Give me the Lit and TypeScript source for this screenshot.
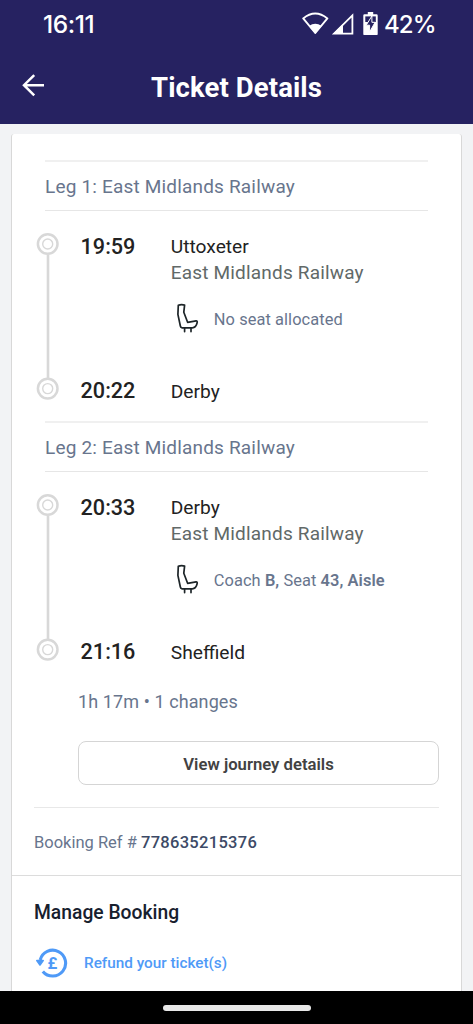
import { LitElement, html, css, svg } from "lit";
import { customElement, property } from "lit/decorators.js";

const base = css`
  * { box-sizing: border-box; }
  :host { display: block; font-family: Roboto, sans-serif; white-space: nowrap; }
`;

@customElement("status-bar")
class StatusBar extends LitElement {
  static styles = [base, css`
    .bar { display: flex; align-items: center; height: 48px; padding: 0 38px 0 43px; color: #fff; font-family: Inter, Roboto, sans-serif; font-size: 24.5px; font-weight: 500; }
    .clock { flex: 1; letter-spacing: -0.4px; }
    .icons { display: block; flex: none; }
    .level { width: 51px; margin-left: 5px; font-size: 24px; letter-spacing: -0.9px; }
  `];
  render() {
    return html`<div class="bar">
      <span class="clock">16:11</span>
      <svg class="icons" width="78" height="26" viewBox="300 11 78 26" fill="none" stroke="#fff">
        <path d="M302.2 18.4 Q314.2 8.6 326.4 18.4 L314.3 33 Z" stroke-width="1.9" stroke-linejoin="round" />
        <path d="M308 26 Q314.3 21.6 320.6 26 L314.3 33.8 Z" fill="#fff" stroke="none" />
        <path d="M333 33.6 L351.4 15.3 V33.6 Z" stroke-width="1.8" />
        <path d="M332 34 L342 24 V34 Z" fill="#fff" stroke="none" />
        <path d="M366.8 12 h5.4 v2.3 h3.3 q1.2 0 1.2 1.2 v18.4 q0 1.2 -1.2 1.2 h-12 q-1.2 0 -1.2 -1.2 v-18.4 q0 -1.2 1.2 -1.2 h3.3 z" fill="#fff" stroke="none" />
        <path d="M364.3 16.4 H374.8 V22 H364.3 Z" fill="#262261" stroke="none" />
        <path d="M370.9 16 L365.2 25.2 H368.6 V32 L374.1 22.3 H370.9 Z" fill="#262261" stroke-width="1" />
      </svg>
      <span class="level">42%</span>
    </div>`;
  }
}

@customElement("journey-leg")
class JourneyLeg extends LitElement {
  @property({ attribute: false }) leg: any;
  static styles = [base, css`
    .leg { height: 261.3px; padding: 0 33px 0 33px; }
    .head { height: 51px; border-top: 2px solid #f0f0f0; border-bottom: 1px solid #e6e6e6; color: #68758d; font-size: 19px; line-height: 50px; letter-spacing: 0.18px; }
    .body { display: grid; grid-template-columns: 45.6px 90.2px 1fr; margin-left: -10px; padding-top: 21px; }
    .rail { display: block; }
    .times, .stops { display: flex; flex-direction: column; justify-content: space-between; height: 173px; }
    .times { font-size: 21.6px; font-weight: 500; color: #222; line-height: 28px; padding-top: 0.5px; }
    .stops { font-size: 19.2px; color: #222; line-height: 26px; padding-top: 1.5px; }
    .operator { color: #616968; font-size: 19px; letter-spacing: 0.18px; }
    .seat { display: flex; align-items: center; gap: 14px; margin-top: 18px; height: 32px; color: #68758d; font-size: 16.4px; letter-spacing: 0.08px; }
    .chair { margin-top: -3px; }
    b { font-weight: 600; }
  `];
  render() {
    const ring = (y: number) => svg`<circle cx="12.7" cy=${y} r="9.8" stroke-width="2.5" /><circle cx="12.7" cy=${y} r="5" stroke-width="1.4" />`;
    return html`<div class="leg">
      <div class="head">${this.leg.title}</div>
      <div class="body">
        <svg class="rail" width="26" height="172" viewBox="0 0 26 172" fill="none" stroke="#d8d8d8">
          ${ring(12)}${ring(156.6)}
          <path d="M13 22.5 V147" stroke-width="2.6" />
        </svg>
        <div class="times"><span>${this.leg.depart}</span><span>${this.leg.arrive}</span></div>
        <div class="stops">
          <div>
            <div>${this.leg.from}</div>
            <div class="operator">East Midlands Railway</div>
            <div class="seat">
              <svg class="chair" width="29" height="32" viewBox="0 0 29 32" fill="none" stroke="#1d2528" stroke-width="1.7" stroke-linejoin="round" stroke-linecap="round">
                <path d="M7.3 3.3 Q10.4 2 13.6 3.1 L12.8 10.2 L16.6 20.3 L25.1 18.9 Q26.6 19.1 26.1 20.8 Q25 25.8 21.3 25.8 H10.8 Q9.6 25.5 9.4 24.2 L6.9 12.4 Z" />
                <path d="M13.6 26 V29.6 M20 26 V29.6" />
              </svg>
              <span>${this.leg.seat}</span>
            </div>
          </div>
          <span>${this.leg.to}</span>
        </div>
      </div>
    </div>`;
  }
}

@customElement("app-root")
class AppRoot extends LitElement {
  static styles = [base, css`
    .screen { display: flex; flex-direction: column; width: 473px; height: 1024px; background: #f2f3f5; overflow: hidden; }
    .top { background: #262261; height: 124px; flex: none; }
    .bar { display: grid; grid-template-columns: 32px 1fr 32px; align-items: center; height: 76px; padding: 0 16px; color: #fff; }
    .title { text-align: center; font-size: 27.5px; font-weight: 700; line-height: 73px; padding-top: 3px; letter-spacing: 0.1px; }
    .back { display: block; }
    .content { flex: 1; min-height: 0; padding: 10px 11px 0; overflow: hidden; }
    .card { height: 100%; background: #fff; border: solid #d8d8d8; border-width: 0 1.5px; border-radius: 3px 3px 0 0; padding-top: 26px; }
    .summary { padding: 0 22px 0 66px; }
    .duration { color: #68758d; font-size: 18px; line-height: 24px; height: 58px; padding-top: 7px; letter-spacing: 0.1px; }
    .button { display: block; width: 361px; height: 44px; padding: 3px 0 0; border: 1.4px solid #d5d5d5; border-radius: 8px; background: #fff; color: #424242; font: 600 16.7px Roboto, sans-serif; }
    .booking { margin: 22px 22px 0; height: 68px; border-top: 1.4px solid #e8e8e8; color: #68758d; font-size: 16.5px; line-height: 70px; }
    .booking b { font-weight: 500; color: #3c4a66; letter-spacing: 0.3px; }
    .manage { border-top: 1.6px solid #dcdcdc; padding: 23px 22px 0; }
    .heading { font-size: 19.3px; font-weight: 500; line-height: 28px; color: #17202e; }
    .refund { display: flex; align-items: center; gap: 16px; margin-top: 19px; height: 34px; color: #4f9af7; font-size: 15.3px; font-weight: 500; }
    .pound { font-size: 16.5px; font-weight: 700; }
    .nav { flex: none; height: 33px; background: #000; display: flex; justify-content: center; align-items: center; }
    .pill { width: 148px; height: 6px; border-radius: 3px; background: #e8e8e8; }
  `];
  render() {
    const legs = [
      { title: "Leg 1: East Midlands Railway", depart: "19:59", arrive: "20:22", from: "Uttoxeter", to: "Derby", seat: "No seat allocated" },
      { title: "Leg 2: East Midlands Railway", depart: "20:33", arrive: "21:16", from: "Derby", to: "Sheffield", seat: html`Coach <b>B,</b> Seat <b>43, Aisle</b>` },
    ];
    return html`<div class="screen">
      <div class="top">
        <status-bar></status-bar>
        <div class="bar">
          <svg class="back" width="32" height="32" viewBox="16 70.5 32 32" fill="none" stroke="#fff" stroke-width="2.5"><path d="M44 85.7 H24 M34.2 75.6 L24 85.7 L34.2 95.8" /></svg>
          <div class="title">Ticket Details</div>
        </div>
      </div>
      <div class="content"><div class="card">
        ${legs.map((l) => html`<journey-leg .leg=${l}></journey-leg>`)}
        <div class="summary">
          <div class="duration">1h 17m • 1 changes</div>
          <button class="button">View journey details</button>
        </div>
        <div class="booking">Booking Ref # <b>778635215376</b></div>
        <div class="manage">
          <div class="heading">Manage Booking</div>
          <div class="refund">
            <svg width="34" height="34" viewBox="34 945 34 34" fill="none" stroke="#4f9af7">
              <path d="M40.2 959 A12.9 12.9 0 1 1 42.8 970.4" stroke-width="3.1" />
              <path d="M36.8 959.6 H43.2 L40 964 Z" fill="#4f9af7" stroke-linejoin="round" stroke-width="1.6" />
              <text class="pound" x="52.3" y="967.7" text-anchor="middle" fill="#4f9af7" stroke="none">£</text>
            </svg>
            <span>Refund your ticket(s)</span>
          </div>
        </div>
      </div></div>
      <div class="nav"><div class="pill"></div></div>
    </div>`;
  }
}
